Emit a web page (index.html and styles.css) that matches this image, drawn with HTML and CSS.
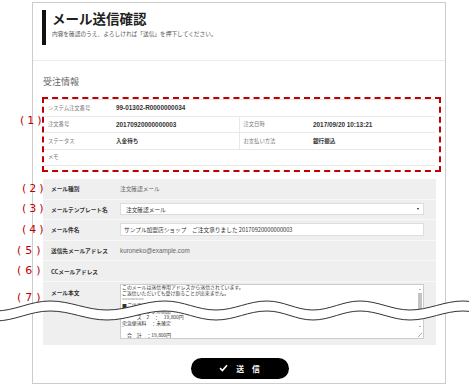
FILE: index.html
```html
<!DOCTYPE html>
<html lang="ja">
<head>
  <meta charset="UTF-8">
  <title>メール送信確認</title>
  <link rel="stylesheet" href="styles.css">
</head>
<body>

  <div class="card">
    <div class="head">
      <div class="head-bar">
        <h1 class="title">メール送信確認</h1>
        <p class="lead">内容を確認のうえ、よろしければ「送信」を押下してください。</p>
      </div>
    </div>

    <div class="content">
      <h2 class="sec-title">受注情報</h2>

      <div class="dashed">
        <span class="mark mark-1">(1)</span>
        <table class="order">
          <colgroup>
            <col class="c-label"><col class="c-value"><col class="c-label2"><col>
          </colgroup>
          <tr>
            <th>システム注文番号</th>
            <td colspan="3">99-01302-R0000000034</td>
          </tr>
          <tr>
            <th>注文番号</th>
            <td>20170920000000003</td>
            <th class="split">注文日時</th>
            <td>2017/09/20 10:13:21</td>
          </tr>
          <tr>
            <th>ステータス</th>
            <td class="jp">入金待ち</td>
            <th class="split">お支払い方法</th>
            <td class="jp">銀行振込</td>
          </tr>
          <tr>
            <th>メモ</th>
            <td colspan="3"></td>
          </tr>
        </table>
      </div>

      <div class="mail">
        <div class="row">
          <span class="mark">(2)</span>
          <div class="label">メール種別</div>
          <div class="value">注文確認メール</div>
        </div>
        <div class="row">
          <span class="mark">(3)</span>
          <div class="label">メールテンプレート名</div>
          <div class="select">注文確認メール<span class="caret"></span></div>
        </div>
        <div class="row">
          <span class="mark">(4)</span>
          <div class="label">メール件名</div>
          <div class="input">サンプル加盟店ショップ　ご注文承りました 20170920000000003</div>
        </div>
        <div class="row">
          <span class="mark mark-low">(5)</span>
          <div class="label">送信先メールアドレス</div>
          <div class="value latin">kuroneko@example.com</div>
        </div>
        <div class="row">
          <span class="mark mark-low">(6)</span>
          <div class="label">CCメールアドレス</div>
          <div class="value"></div>
        </div>
        <div class="row row-body">
          <span class="mark mark-low mark-body">(7)</span>
          <div class="label">メール本文</div>
          <div class="textarea">
            <div class="lines">
              <div>このメールは送信専用アドレスから送信されています。</div>
              <div>ご返信いただいても受け取ることが出来ません。</div>
              <div>========</div>
              <div>■ご注文内容</div>
              <div>商品名：サンプル商品</div>
              <div>　　　ス　2　：　19,800円</div>
              <div>宅急便送料　：未確定</div>
              <div>‾</div>
              <div>　合　計　：19,800円</div>
            </div>
            <div class="scroll">
              <span class="arrow up"></span>
              <span class="thumb"></span>
              <span class="arrow down"></span>
              <span class="grip"></span>
            </div>
          </div>
        </div>
      </div>

      <div class="actions">
        <button class="send">
          <svg width="9" height="8" viewBox="0 0 9 8"><polyline points="1,4.2 3.4,6.5 8,1.2" fill="none" stroke="#fff" stroke-width="1.6"/></svg>
          送　信
        </button>
      </div>
    </div>
  </div>

  <svg class="tear" width="469" height="40" viewBox="0 290 469 40">
    <defs>
      <path id="wave" d="M -5 311 C 15 311 30 301 50 301 C 71 301 86 310 107 310 C 128 310 144 301 165 301 C 184 301 197 310 216 310 C 235 310 248 301 267 301 C 284 301 296 310 313 310 C 330 310 343 301 360 301 C 378 301 392 310 410 310 C 429 310 444 301 463 301 C 480 301 495 310 515 310"/>
    </defs>
    <use href="#wave" transform="translate(0,5)" fill="none" stroke="#fff" stroke-width="10"/>
    <use href="#wave" fill="none" stroke="#333" stroke-width="1"/>
    <use href="#wave" transform="translate(0,10)" fill="none" stroke="#333" stroke-width="1"/>
  </svg>

</body>
</html>
```

FILE: styles.css
```css
body {
  margin: 0;
  background: #fff;
  font-family: "Noto Sans CJK JP", sans-serif;
  color: #333;
}

.card {
  width: 412px;
  height: 380px;
  margin: 2px 0 0 32px;
  border: 1px solid #ccc;
}

/* header */
.head {
  height: 53px;
  padding: 4px 0 0 9px;
  border-bottom: 1px solid #ececec;
}

.head-bar {
  height: 35px;
  border-left: 4px solid #111;
  padding-left: 6px;
}

.title {
  margin: 3px 0 0;
  font-size: 13.5px;
  line-height: 16px;
  font-weight: bold;
  color: #222;
}

.lead {
  margin: 4px 0 0;
  font-size: 5.7px;
  line-height: 8px;
  color: #555;
}

.content {
  padding: 0 9px 0 10px;
}

.sec-title {
  margin: 15px 0 9px;
  font-size: 9px;
  line-height: 12px;
  font-weight: normal;
  color: #666;
}

/* red annotations */
.mark {
  position: absolute;
  left: -21px;
  top: 50%;
  transform: translateY(-50%);
  font-family: "DejaVu Sans", sans-serif;
  font-size: 11px;
  line-height: 12px;
  letter-spacing: 3px;
  color: #c00000;
}

.mark-1 {
  left: -24px;
  top: 22px;
}

.mark-low {
  left: -26px;
  letter-spacing: 4px;
}

.mark-body {
  top: 16px;
}

/* order box */
.dashed {
  position: relative;
  margin: 0 -5px 0 -1px;
  padding: 0 4px 4px 0;
  border: 2px dashed #c00000;
}

.order {
  width: 391px;
  table-layout: fixed;
  border-collapse: collapse;
  background: #fff;
  border-top: 1px solid #e8e8e8;
}

.c-label { width: 68px; }
.c-value { width: 127px; }
.c-label2 { width: 70px; }

.order tr {
  height: 16.5px;
  border-bottom: 1px solid #e8e8e8;
}

.order th,
.order td {
  padding: 0 0 0 4px;
  text-align: left;
  white-space: nowrap;
}

.order th {
  font-size: 5.3px;
  font-weight: normal;
  color: #777;
}

.order th.split {
  border-left: 1px solid #e8e8e8;
}

.order td {
  font-family: "Liberation Sans", "Noto Sans CJK JP", sans-serif;
  font-size: 6.4px;
  font-weight: bold;
  color: #333;
}

.order td.jp {
  font-size: 5.6px;
}

/* mail form */
.mail {
  margin-top: 7px;
  background: #efefef;
}

.row {
  position: relative;
  display: flex;
  align-items: center;
  height: 19.6px;
  border-bottom: 1px solid #f8f8f8;
}

.label {
  width: 69px;
  padding-left: 8px;
  font-size: 5.7px;
  font-weight: bold;
  color: #333;
}

.value {
  font-size: 5.7px;
  color: #666;
}

.value.latin {
  font-family: "Liberation Sans", sans-serif;
  font-size: 6.3px;
}

.select,
.input {
  position: relative;
  box-sizing: border-box;
  width: 304px;
  background: #fff;
  border: 1px solid #ddd;
  font-size: 5.7px;
  color: #333;
  display: flex;
  align-items: center;
}

.select {
  height: 12px;
  padding-left: 5px;
}

.input {
  height: 13px;
  padding-left: 3px;
}

.caret {
  position: absolute;
  right: 4px;
  top: 4px;
  border-left: 1.5px solid transparent;
  border-right: 1.5px solid transparent;
  border-top: 2px solid #222;
}

.row-body {
  height: 63px;
  align-items: flex-start;
  border-bottom: none;
}

.row-body .label {
  padding-top: 6px;
}

.textarea {
  position: relative;
  box-sizing: border-box;
  width: 304px;
  height: 55px;
  margin-top: 2.5px;
  background: #fff;
  border: 1px solid #ccc;
  overflow: hidden;
}

.lines {
  margin-top: -1px;
  padding-left: 1px;
  font-size: 4.9px;
  line-height: 6px;
  color: #333;
  white-space: nowrap;
}

.scroll {
  position: absolute;
  top: 1px;
  right: 0;
  bottom: 0;
  width: 6px;
}

.arrow {
  position: absolute;
  left: 1.5px;
  border-left: 1.5px solid transparent;
  border-right: 1.5px solid transparent;
}

.arrow.up {
  top: 3px;
  border-bottom: 1.5px solid #666;
}

.arrow.down {
  bottom: 11px;
  border-top: 1.5px solid #666;
}

.thumb {
  position: absolute;
  top: 7px;
  left: 1px;
  width: 4px;
  height: 20px;
  background: #c3c3c3;
}

.grip {
  position: absolute;
  right: 1px;
  bottom: 1px;
  width: 4px;
  height: 4px;
  background: linear-gradient(135deg, transparent 45%, #aaa 50%, transparent 60%, transparent 75%, #aaa 80%, transparent 90%);
}

/* send button */
.actions {
  display: flex;
  justify-content: center;
  margin-top: 13px;
}

.send {
  display: flex;
  align-items: center;
  justify-content: center;
  gap: 8px;
  width: 98px;
  height: 21px;
  padding: 0;
  border: none;
  border-radius: 11px;
  background: #000;
  color: #fff;
  font-family: "Noto Sans CJK JP", sans-serif;
  font-size: 7.8px;
  font-weight: bold;
}

.tear {
  position: absolute;
  left: 0;
  top: 290px;
  pointer-events: none;
}
```
